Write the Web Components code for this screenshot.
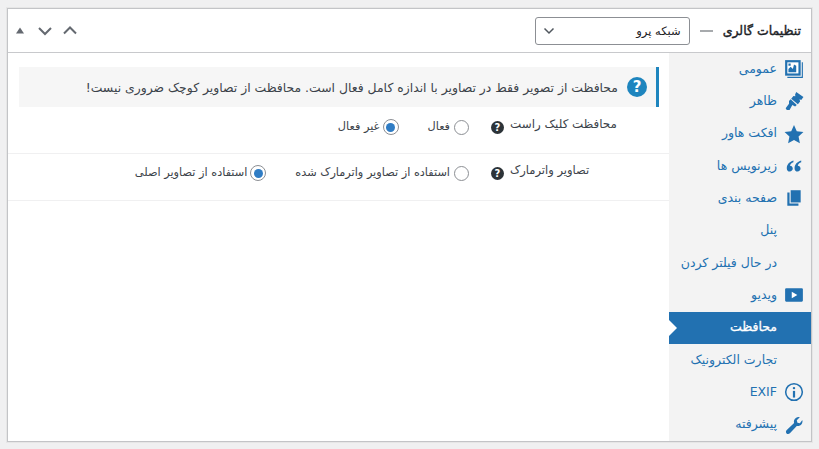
<!DOCTYPE html>
<html lang="fa" dir="rtl"><head><meta charset="utf-8"><style>
html,body{margin:0;height:100%;background:#f0f0f1}
body{font-family:"DejaVu Sans",sans-serif;padding:8px 7px 7px 7px;box-sizing:border-box}
</style></head><body>
<gallery-box></gallery-box>
<script>
const ico={
general:'<svg viewBox="0 0 18 18" width="20" height="20"><path fill="#2271b1" d="M1 1h14v14H1z"/><path fill="none" stroke="#2271b1" d="M16.500 3v13.500H3"/><path fill="#fff" d="M3 3h10v10H3z"/><path fill="#2271b1" d="M4 12V9l2-2 2 2 1-4 2 1v6zM4 4h2v2H4z"/></svg>',
brush:'<svg viewBox="0 0 18 18" width="20" height="20"><path fill="#2271b1" d="M11 1l6.500 4.500-2 2.500-1.500-.5.500 2-2 2.500-6-5 2-2.500 1.700.3-.2-1.600zM6 7.500l5.500 5-1.500 1.500-2.500-1.500L5 17H2.500L1.500 15.500 4.500 11.500 4.500 9z"/></svg>',
star:'<svg viewBox="0 0 18 18" width="20" height="20"><path fill="#2271b1" d="M9 1l2.500 5.500 6 .7-4.400 4.100 1.200 6L9 14.300l-5.300 3 1.200-6L.5 7.200l6-.7z"/></svg>',
quote:'<svg viewBox="0 0 18 18" width="20" height="20"><path fill="#2271b1" d="M8.500 4C5 5 2.500 7.500 2.500 11c0 2 1.200 3 2.700 3s2.700-1.200 2.700-2.700-1.100-2.500-2.500-2.600C5.700 7.500 7 6.200 8.500 5.700zM15.500 4C12 5 9.500 7.500 9.500 11c0 2 1.200 3 2.700 3s2.700-1.200 2.700-2.700-1.100-2.500-2.500-2.600c.3-1.200 1.600-2.500 3.100-3z"/></svg>',
pages:'<svg viewBox="0 0 18 18" width="20" height="20"><path fill="#2271b1" d="M6 2h9v11H6z"/><path fill="#2271b1" d="M3 4h2v10h8v2H3z"/></svg>',
video:'<svg viewBox="0 0 18 18" width="20" height="20"><rect fill="#2271b1" x="1" y="3" width="16" height="12" rx="1"/><path fill="#fff" d="M7 6l5 3-5 3z"/></svg>',
info:'<svg viewBox="0 0 18 18" width="20" height="20"><circle cx="9" cy="9" r="7.500" fill="none" stroke="#2271b1" stroke-width="1.400"/><circle cx="9" cy="5.500" r="1.100" fill="#2271b1"/><path fill="#2271b1" d="M8 8h2v6H8z"/></svg>',
wrench:'<svg viewBox="0 0 18 18" width="20" height="20"><path fill="#2271b1" d="M16.500 4.500c.6 2.200-.5 4.500-2.700 5.200-.8.300-1.600.3-2.300.1L5.300 16.500c-.9.900-2.300.9-3 .1-.8-.8-.7-2.100.2-3l6.600-6.300c-.3-.8-.3-1.700 0-2.500C9.800 2.700 12 1.500 14.200 2l-2.700 2.700.6 2.200 2.200.5z"/></svg>'
};
function def(n,tpl){customElements.define(n,class extends HTMLElement{connectedCallback(){if(this.shadowRoot)return;const s=this.attachShadow({mode:'open'});s.innerHTML=typeof tpl==='function'?tpl(this):tpl;}})}
def('nav-item',el=>`<style>
:host{display:flex;align-items:center;height:32.400px;padding:0 7px 2px 8px;box-sizing:border-box;color:#2271b1;font-size:12.500px;gap:7px;white-space:nowrap;position:relative}
:host([active]){background:#2271b1;color:#fff;-webkit-text-stroke:.3px #fff}
.i{width:20px;height:20px;flex:none;display:flex;position:relative;top:1px}
.tip{position:absolute;left:0;top:50%;margin-top:-8px;border:8px solid transparent;border-left-color:#fff;border-right:0}
</style><span class="i">${ico[el.getAttribute('icon')]||''}</span><slot></slot>${el.hasAttribute('active')?'<span class="tip"></span>':''}`);
def('help-dot','<style>:host{display:inline-flex;width:13px;height:13px;border-radius:50%;background:#2c3338;color:#fff;font:700 10px/13px "DejaVu Sans",sans-serif;justify-content:center;flex:none;transform:translateY(3px)}</style>?');
def('radio-opt',el=>{const c=el.hasAttribute('checked');return `<style>
:host{display:inline-flex;align-items:center;gap:${c?3:4}px;white-space:nowrap}
.r{width:${c?16:15}px;height:${c?16:15}px;box-sizing:border-box;border:1px solid #8c8f94;border-radius:50%;background:#fff;display:flex;align-items:center;justify-content:center;flex:none;transform:translateY(1px)}
.r i{width:9px;height:9px;border-radius:50%;background:#2f7cc4;display:${c?'block':'none'}}
</style><span class="r"><i></i></span><slot></slot>`});
def('setting-row',`<style>
:host{display:flex;align-items:flex-start;border-bottom:1px solid #f0f0f1;font-size:11.300px;color:#3c434a;box-sizing:border-box;padding-right:53px}
.l{width:147px;display:flex;gap:6px;align-items:center;flex:none;white-space:nowrap;margin-top:-1px}
.t{width:106px;display:flex;justify-content:flex-end}
.o{display:flex;gap:29px}
</style><div class="l"><span class="t"><slot name="label"></slot></span><slot name="help"></slot></div><div class="o"><slot></slot></div>`);
def('notice-bar',`<style>
:host{display:flex;align-items:center;height:40px;background:#f6f6f6;border-right:3px solid #1e85be;margin:14px 10px 0 11px;font-size:12.400px;color:#3c434a;padding-right:9px;gap:9px;white-space:nowrap}
.q{width:20px;height:20px;border-radius:50%;background:#1e85be;color:#fff;font:700 15px/20px "DejaVu Sans",sans-serif;text-align:center;flex:none}
</style><span class="q">?</span><slot></slot>`);
def('box-header',`<style>
:host{display:flex;align-items:center;height:44px;border-bottom:1px solid #c8c9cc;padding:0 10px 0 7px;background:#fff;box-sizing:border-box}
b{font-size:12.500px;font-weight:400;-webkit-text-stroke:.4px #1d2327;color:#1d2327;white-space:nowrap}
.dash{width:13px;height:2px;background:#a7aaad;margin:0 10px}
.sel{width:155px;height:28px;box-sizing:border-box;border:1px solid #8c8f94;border-radius:3px;display:flex;align-items:center;justify-content:space-between;padding:0 8px 0 7px;font-size:11.500px;color:#1d2327;background:#fff}
.ctl{margin-right:auto;display:flex;align-items:center;color:#646970}
.ctl svg:nth-child(1){margin-left:8.500px}
.ctl svg:nth-child(2){margin-left:12px}
</style><b>تنظیمات گالری</b><span class="dash"></span><div class="sel"><span>شبکه پرو</span><svg width="12" height="12" viewBox="0 0 12 12"><path d="M1.500 3.500L6 8l4.500-4.500" fill="none" stroke="#50575e" stroke-width="1.500"/></svg></div>
<div class="ctl">
<svg width="16" height="16" viewBox="0 0 16 16"><path d="M2 10.500L8 4.500l6 6" fill="none" stroke="#646970" stroke-width="2"/></svg>
<svg width="16" height="16" viewBox="0 0 16 16"><path d="M2 5L8 11l6-6" fill="none" stroke="#646970" stroke-width="2"/></svg>
<svg width="10" height="16" viewBox="0 0 10 16"><path d="M1 10.500L5 4.500l4 6z" fill="#646970"/></svg>
</div>`);
def('gallery-box',`<style>
:host{display:flex;flex-direction:column;height:100%;box-sizing:border-box;border:1px solid #c3c4c7;background:#fff;box-shadow:0 0 0 1px #e6e6e6}
.b{display:flex;flex:1;min-height:0}
nav{width:142px;background:#f3f3f3;flex:none;display:flex;flex-direction:column}
main{flex:1}
setting-row.a{height:47px;padding-top:11px}
setting-row.c{height:47px;padding-top:10px}
.a [slot=label]{font-size:11.900px}
.c [slot=label]{font-size:11.500px}
</style><box-header></box-header><div class="b">
<nav>
<nav-item icon="general">عمومی</nav-item><nav-item icon="brush">ظاهر</nav-item><nav-item icon="star">افکت هاور</nav-item><nav-item icon="quote">زیرنویس ها</nav-item><nav-item icon="pages">صفحه بندی</nav-item><nav-item icon="none">پنل</nav-item><nav-item icon="none">در حال فیلتر کردن</nav-item><nav-item icon="video">ویدیو</nav-item><nav-item icon="none" active>محافظت</nav-item><nav-item icon="none">تجارت الکترونیک</nav-item><nav-item icon="info">EXIF</nav-item><nav-item icon="wrench">پیشرفته</nav-item>
</nav>
<main>
<notice-bar>محافظت از تصویر فقط در تصاویر با اندازه کامل فعال است. محافظت از تصاویر کوچک ضروری نیست!</notice-bar>
<setting-row class="a"><span slot="label">محافظت کلیک راست</span><help-dot slot="help"></help-dot><radio-opt>فعال</radio-opt><radio-opt checked>غیر فعال</radio-opt></setting-row>
<setting-row class="c"><span slot="label">تصاویر واترمارک</span><help-dot slot="help"></help-dot><radio-opt>استفاده از تصاویر واترمارک شده</radio-opt><radio-opt checked>استفاده از تصاویر اصلی</radio-opt></setting-row>
</main></div>`);
</script></body></html>
